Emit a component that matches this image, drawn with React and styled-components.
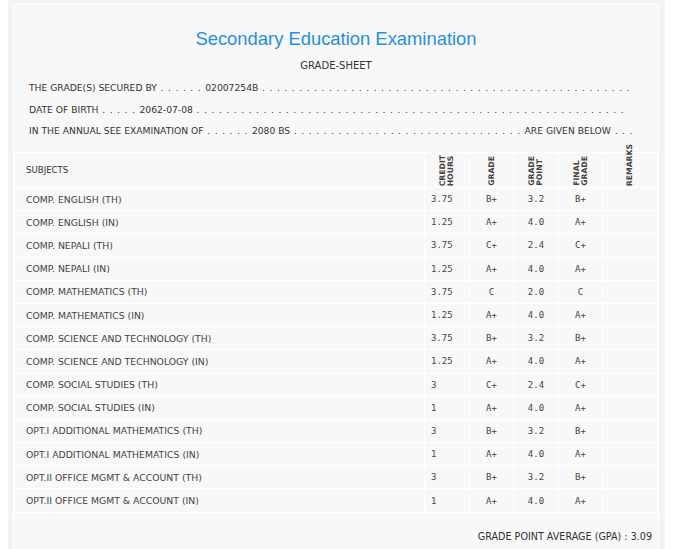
import styled, { createGlobalStyle } from 'styled-components'

const Global = createGlobalStyle`
  body {
    margin: 0 8px;
    background: #fff;
    font-family: "DejaVu Sans", Verdana, sans-serif;
  }
`

const Outer = styled.div`
  width: 657px;
  background: #f3f3f3;
  padding: 3px 6px 6px 5px;
  box-sizing: border-box;
`

const Sheet = styled.div`
  background: #f8f8f8;
  border: 1px solid #fff;
  padding: 0 0 12px;
`

const Title = styled.h1`
  margin: 0;
  padding-top: 24px;
  text-align: center;
  font-family: "Liberation Sans", Arial, sans-serif;
  font-weight: normal;
  font-size: 18.4px;
  line-height: 22px;
  color: #1e90e6;
`

const SubTitle = styled.div`
  text-align: center;
  font-size: 10px;
  color: #333;
  margin-top: 10px;
`

const Info = styled.div`
  padding: 11px 0 0 15px;
  display: flex;
  flex-direction: column;
  gap: 9.5px;
`

const Line = styled.div`
  font-size: 9.2px;
  line-height: 12px;
  color: #333;
  white-space: nowrap;
`

const DotRun = styled.span`
  letter-spacing: 0.8px;
`

const Table = styled.table`
  margin-top: 15px;
  width: 100%;
  border-collapse: collapse;
  table-layout: fixed;
  font-size: 9.3px;
  color: #444;
`

const Th = styled.th`
  border: 1px solid #fff;
  padding: 0;
  font-weight: normal;
`

const HeadBox = styled.div`
  height: 34px;
  display: flex;
  align-items: ${p => (p.$left ? 'center' : 'flex-end')};
  justify-content: ${p => (p.$left ? 'flex-start' : 'center')};
  padding-left: ${p => (p.$left ? '11px' : '0')};
  font-size: 8.6px;
  color: #333;
`

const Rot = styled.span`
  display: inline-block;
  writing-mode: vertical-rl;
  transform: rotate(180deg);
  font-weight: bold;
  font-size: 7.7px;
  line-height: 8px;
  color: #444;
  text-align: left;
  margin-bottom: 1px;
  white-space: nowrap;
`

const Td = styled.td`
  border: 1px solid #fff;
  height: 22.2px;
  padding: 0 0 0 ${p => p.$pl || 0}px;
  text-align: ${p => (p.$center ? 'center' : 'left')};
  font-family: ${p => (p.$mono ? '"DejaVu Sans Mono", monospace' : 'inherit')};
  font-size: ${p => (p.$mono ? '9px' : '9.3px')};
`

const Gpa = styled.div`
  text-align: right;
  padding: 18px 6px 0 0;
  font-size: 9.6px;
  color: #333;
`

const rows = [
  ['COMP. ENGLISH (TH)', '3.75', 'B+', '3.2', 'B+'],
  ['COMP. ENGLISH (IN)', '1.25', 'A+', '4.0', 'A+'],
  ['COMP. NEPALI (TH)', '3.75', 'C+', '2.4', 'C+'],
  ['COMP. NEPALI (IN)', '1.25', 'A+', '4.0', 'A+'],
  ['COMP. MATHEMATICS (TH)', '3.75', 'C', '2.0', 'C'],
  ['COMP. MATHEMATICS (IN)', '1.25', 'A+', '4.0', 'A+'],
  ['COMP. SCIENCE AND TECHNOLOGY (TH)', '3.75', 'B+', '3.2', 'B+'],
  ['COMP. SCIENCE AND TECHNOLOGY (IN)', '1.25', 'A+', '4.0', 'A+'],
  ['COMP. SOCIAL STUDIES (TH)', '3', 'C+', '2.4', 'C+'],
  ['COMP. SOCIAL STUDIES (IN)', '1', 'A+', '4.0', 'A+'],
  ['OPT.I ADDITIONAL MATHEMATICS (TH)', '3', 'B+', '3.2', 'B+'],
  ['OPT.I ADDITIONAL MATHEMATICS (IN)', '1', 'A+', '4.0', 'A+'],
  ['OPT.II OFFICE MGMT & ACCOUNT (TH)', '3', 'B+', '3.2', 'B+'],
  ['OPT.II OFFICE MGMT & ACCOUNT (IN)', '1', 'A+', '4.0', 'A+'],
]

const Dots = ({ n }) => <DotRun>{' .'.repeat(n) + ' '}</DotRun>

export default function App() {
  return (
    <Outer>
      <Global />
      <Sheet>
        <Title>Secondary Education Examination</Title>
        <SubTitle>GRADE-SHEET</SubTitle>
        <Info>
          <Line>THE GRADE(S) SECURED BY<Dots n={6} />02007254B<Dots n={50} /></Line>
          <Line>DATE OF BIRTH<Dots n={5} />2062-07-08<Dots n={58} /></Line>
          <Line>IN THE ANNUAL SEE EXAMINATION OF<Dots n={6} />2080 BS<Dots n={31} />ARE GIVEN BELOW<Dots n={3} /></Line>
        </Info>
        <Table>
          <colgroup>
            <col style={{ width: 410 }} />
            <col style={{ width: 45 }} />
            <col style={{ width: 44 }} />
            <col style={{ width: 45 }} />
            <col style={{ width: 44 }} />
            <col />
          </colgroup>
          <thead>
            <tr>
              <Th><HeadBox $left>SUBJECTS</HeadBox></Th>
              <Th><HeadBox><Rot>CREDIT<br />HOURS</Rot></HeadBox></Th>
              <Th><HeadBox><Rot>GRADE</Rot></HeadBox></Th>
              <Th><HeadBox><Rot>GRADE<br />POINT</Rot></HeadBox></Th>
              <Th><HeadBox><Rot>FINAL<br />GRADE</Rot></HeadBox></Th>
              <Th><HeadBox><Rot>REMARKS</Rot></HeadBox></Th>
            </tr>
          </thead>
          <tbody>
            {rows.map(r => (
              <tr key={r[0]}>
                <Td $pl={11}>{r[0]}</Td>
                <Td $mono $pl={6}>{r[1]}</Td>
                <Td $mono $center>{r[2]}</Td>
                <Td $mono $center>{r[3]}</Td>
                <Td $mono $center>{r[4]}</Td>
                <Td />
              </tr>
            ))}
          </tbody>
        </Table>
        <Gpa>GRADE POINT AVERAGE (GPA) : 3.09</Gpa>
      </Sheet>
    </Outer>
  )
}
